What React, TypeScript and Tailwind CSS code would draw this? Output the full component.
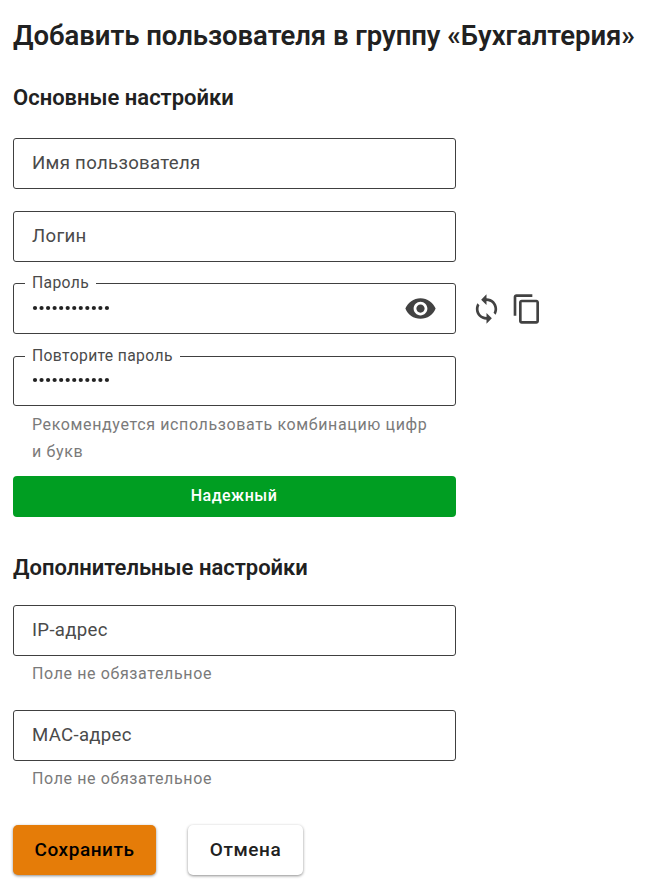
import React from "react";

function Field({ label }: { label: string }) {
  return (
    <div className="flex h-[51px] w-[443px] items-center rounded-[3px] border border-[#404040] px-[18px] pb-px text-[18.6px] leading-[28px] tracking-[0.31px] text-[#4a4a4a]">
      {label}
    </div>
  );
}

function PasswordField({ label, children, height, rowHeight }: { label: string; children?: React.ReactNode; height: string; rowHeight: string }) {
  return (
    <fieldset className={`${height} w-[443px] rounded-[3px] border border-[#404040] px-[18px]`}>
      <legend className="-ml-[7px] h-[17px] px-[7px] text-[15.7px] leading-[16px] tracking-[0.36px] text-[#4a4a4a]">{label}</legend>
      <div className={`flex items-center justify-between ${rowHeight}`}>
        <svg width="80" height="7" viewBox="0 0 80 7" fill="#222">
          {Array.from({ length: 12 }, (_, i) => (
            <circle key={i} cx={3 + i * 6.54} cy="3" r="2.1" />
          ))}
        </svg>
        {children}
      </div>
    </fieldset>
  );
}

export default function App() {
  return (
    <main className="h-[891px] w-[653px] overflow-hidden bg-white pl-[13px] pt-[16px] font-['Roboto',sans-serif] text-[#212121]">
      <h1 className="h-[40px] whitespace-nowrap text-[27.5px] font-semibold leading-[40px] tracking-[-0.04px]">Добавить пользователя в группу «Бухгалтерия»</h1>
      <h2 className="mt-[27px] h-[30px] text-[22px] font-semibold leading-[30px]">Основные настройки</h2>
      <div className="mt-[25px]"><Field label="Имя пользователя" /></div>
      <div className="mt-[22px]"><Field label="Логин" /></div>
      <div className="mt-[13px] flex h-[59px]">
        <PasswordField label="Пароль" height="h-[59px]" rowHeight="h-[33px]">
          <svg width="33" height="33" viewBox="0 0 24 24" fill="#424242"><path d="M12 4.5C7 4.5 2.73 7.61 1 12c1.73 4.39 6 7.5 11 7.5s9.27-3.11 11-7.5c-1.73-4.39-6-7.5-11-7.5zM12 17c-2.76 0-5-2.24-5-5s2.24-5 5-5 5 2.24 5 5-2.24 5-5 5zm0-8c-1.66 0-3 1.34-3 3s1.34 3 3 3 3-1.34 3-3-1.34-3-3-3z" /></svg>
        </PasswordField>
        <div className="ml-[14px] mt-[18px] flex gap-[8px]">
          <svg width="33" height="32" viewBox="0 0 24 24" fill="#424242"><path d="M12 4V1L8 5l4 4V6c3.31 0 6 2.69 6 6 0 1.01-.25 1.97-.7 2.8l1.46 1.46C19.54 15.03 20 13.57 20 12c0-4.42-3.58-8-8-8zm0 14c-3.31 0-6-2.69-6-6 0-1.01.25-1.97.7-2.8L5.24 7.74C4.46 8.97 4 10.43 4 12c0 4.42 3.58 8 8 8v3l4-4-4-4v3z" /></svg>
          <svg width="32" height="32" viewBox="0 0 24 24" fill="#424242"><path d="M16 1H4c-1.1 0-2 .9-2 2v14h2V3h12V1zm3 4H8c-1.1 0-2 .9-2 2v14c0 1.1.9 2 2 2h11c1.1 0 2-.9 2-2V7c0-1.1-.9-2-2-2zm0 16H8V7h11v14z" /></svg>
        </div>
      </div>
      <div className="mt-[14px]"><PasswordField label="Повторите пароль" height="h-[58px]" rowHeight="h-[31px]" /></div>
      <p className="mt-[5px] w-[430px] pl-[19px] text-[16px] leading-[27px] tracking-[0.63px] text-[#7a7a7a]">Рекомендуется использовать комбинацию цифр<br />и букв</p>
      <div className="mt-[11px] flex h-[41px] w-[443px] items-center justify-center rounded-[4px] bg-[#009e22] pb-[2px] pr-px text-[16px] font-medium tracking-[0.5px] text-white">Надежный</div>
      <h2 className="mt-[36px] h-[30px] text-[22px] font-semibold leading-[30px]">Дополнительные настройки</h2>
      <div className="mt-[22px]"><Field label="IP-адрес" /></div>
      <p className="mt-[4px] h-[27px] pl-[19px] text-[16px] leading-[27px] tracking-[0.62px] text-[#7a7a7a]">Поле не обязательное</p>
      <div className="mt-[23px]"><Field label="MAC-адрес" /></div>
      <p className="mt-[4px] h-[27px] pl-[19px] text-[16px] leading-[27px] tracking-[0.62px] text-[#7a7a7a]">Поле не обязательное</p>
      <div className="mt-[33px] flex gap-[32px] text-[19px] font-medium tracking-[0.55px]">
        <button className="h-[50px] w-[143px] rounded-[5px] bg-[#e57c08] text-black shadow-[0_1px_3px_rgba(0,0,0,0.45)]">Сохранить</button>
        <button className="h-[50px] w-[115px] rounded-[5px] bg-white shadow-[0_1px_3px_rgba(0,0,0,0.45)]">Отмена</button>
      </div>
    </main>
  );
}
